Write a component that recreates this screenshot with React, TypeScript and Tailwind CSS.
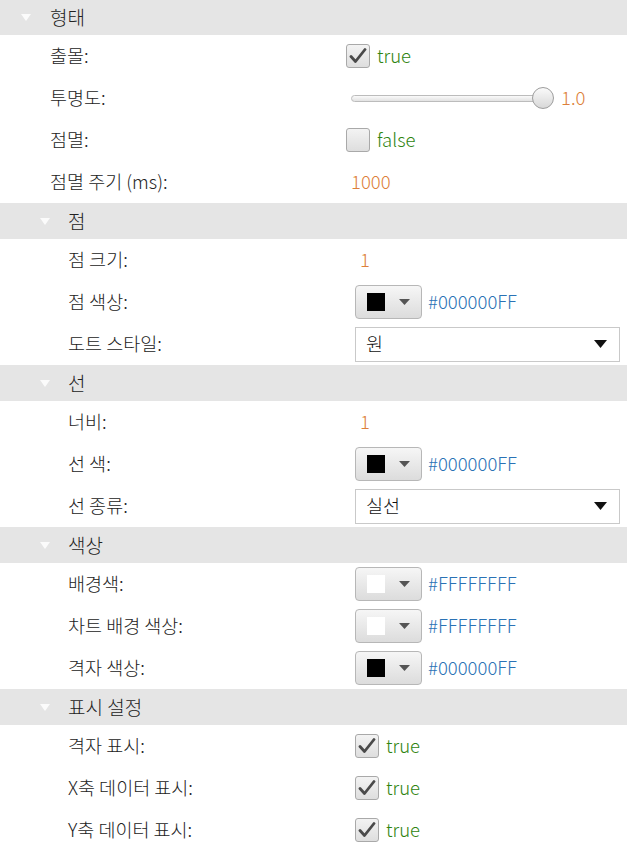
import React from "react";

const FONT = { fontFamily: '"Noto Sans CJK KR", "Noto Sans", sans-serif' };

function Header({ title, nested, first }: { title: string; nested?: boolean; first?: boolean }) {
  return (
    <div className={`flex items-center bg-[#e5e5e5] ${first ? "h-[35px]" : "h-[36px]"}`}>
      <div className={`${nested ? "w-[68px] pl-[40px]" : "w-[50px] pl-[21px]"} flex items-center`}>
        <svg width="10" height="7" viewBox="0 0 10 7">
          <path d="M0 0 L10 0 L5 7 Z" fill="#fbfbfb" />
        </svg>
      </div>
      <span className="text-[19px] font-light text-[#222]">{title}</span>
    </div>
  );
}

function Row({ label, nested, children }: { label: string; nested?: boolean; children: React.ReactNode }) {
  return (
    <div className="flex items-center h-[42px] bg-white">
      <div className={`${nested ? "w-[355px] pl-[68px]" : "w-[346px] pl-[50px]"} text-[18.5px] font-light text-[#222] whitespace-nowrap`}>
        {label}
      </div>
      <div className="flex items-center flex-1">{children}</div>
    </div>
  );
}

function Check({ on, label }: { on: boolean; label: string }) {
  return (
    <div className="flex items-center">
      <div className="w-[24px] h-[24px] rounded-[3px] border border-[#a9a9a9] bg-gradient-to-b from-[#f3f3f3] to-[#dedede] flex items-center justify-center">
        {on && (
          <svg width="18" height="16" viewBox="0 0 18 16">
            <path d="M2 8.5 L6.5 13.5 L16 1.5" fill="none" stroke="#4a4a4a" strokeWidth="2.8" strokeLinecap="round" strokeLinejoin="round" />
          </svg>
        )}
      </div>
      <span className="ml-[7px] text-[18.5px] font-light text-[#2f8410]">{label}</span>
    </div>
  );
}

function Num({ v }: { v: string }) {
  return <span className="ml-[5px] text-[18.5px] font-light text-[#dd7f3a]">{v}</span>;
}

function ColorPick({ color, hex }: { color: string; hex: string }) {
  return (
    <div className="flex items-center">
      <div className="w-[67px] h-[34px] rounded-[4px] border border-[#b7b7b7] bg-gradient-to-b from-[#f6f6f6] to-[#dcdcdc] flex items-center pl-[11px]">
        <div className="w-[18px] h-[18px]" style={{ background: color }} />
        <svg className="ml-[14px]" width="11" height="6" viewBox="0 0 11 6">
          <path d="M0 0 L11 0 L5.5 6 Z" fill="#555" />
        </svg>
      </div>
      <span className="ml-[6px] text-[18.5px] font-light text-[#2a72b5]">{hex}</span>
    </div>
  );
}

function Select({ value }: { value: string }) {
  return (
    <div className="w-[265px] h-[35px] border border-[#c9c9c9] bg-white flex items-center justify-between pl-[10px] pr-[12px]">
      <span className="text-[18.5px] font-light text-[#111]">{value}</span>
      <svg width="13" height="8" viewBox="0 0 13 8">
        <path d="M0 0 L13 0 L6.5 8 Z" fill="#111" />
      </svg>
    </div>
  );
}

function Slider() {
  return (
    <div className="flex items-center">
      <div className="relative w-[204px] h-[24px] flex items-center ml-[5px]">
        <div className="w-[194px] h-[7px] rounded-full border border-[#bcbcbc] bg-gradient-to-b from-[#fafafa] to-[#e2e2e2]" />
        <div className="absolute left-[181px] top-[1px] w-[22px] h-[22px] rounded-full border border-[#9d9d9d] bg-gradient-to-b from-[#fafafa] to-[#d8d8d8]" />
      </div>
      <span className="ml-[6px] text-[18.5px] font-light text-[#dd7f3a]">1.0</span>
    </div>
  );
}

export default function App() {
  return (
    <div className="w-[627px] h-[848px] overflow-hidden bg-white" style={FONT}>
      <Header title="형태" first />
      <Row label="출몰:"><Check on label="true" /></Row>
      <Row label="투명도:"><Slider /></Row>
      <Row label="점멸:"><Check on={false} label="false" /></Row>
      <Row label="점멸 주기 (ms):"><Num v="1000" /></Row>

      <Header title="점" nested />
      <Row nested label="점 크기:"><Num v="1" /></Row>
      <Row nested label="점 색상:"><ColorPick color="#000" hex="#000000FF" /></Row>
      <Row nested label="도트 스타일:"><Select value="원" /></Row>

      <Header title="선" nested />
      <Row nested label="너비:"><Num v="1" /></Row>
      <Row nested label="선 색:"><ColorPick color="#000" hex="#000000FF" /></Row>
      <Row nested label="선 종류:"><Select value="실선" /></Row>

      <Header title="색상" nested />
      <Row nested label="배경색:"><ColorPick color="#fff" hex="#FFFFFFFF" /></Row>
      <Row nested label="차트 배경 색상:"><ColorPick color="#fff" hex="#FFFFFFFF" /></Row>
      <Row nested label="격자 색상:"><ColorPick color="#000" hex="#000000FF" /></Row>

      <Header title="표시 설정" nested />
      <Row nested label="격자 표시:"><Check on label="true" /></Row>
      <Row nested label="X축 데이터 표시:"><Check on label="true" /></Row>
      <Row nested label="Y축 데이터 표시:"><Check on label="true" /></Row>
    </div>
  );
}
